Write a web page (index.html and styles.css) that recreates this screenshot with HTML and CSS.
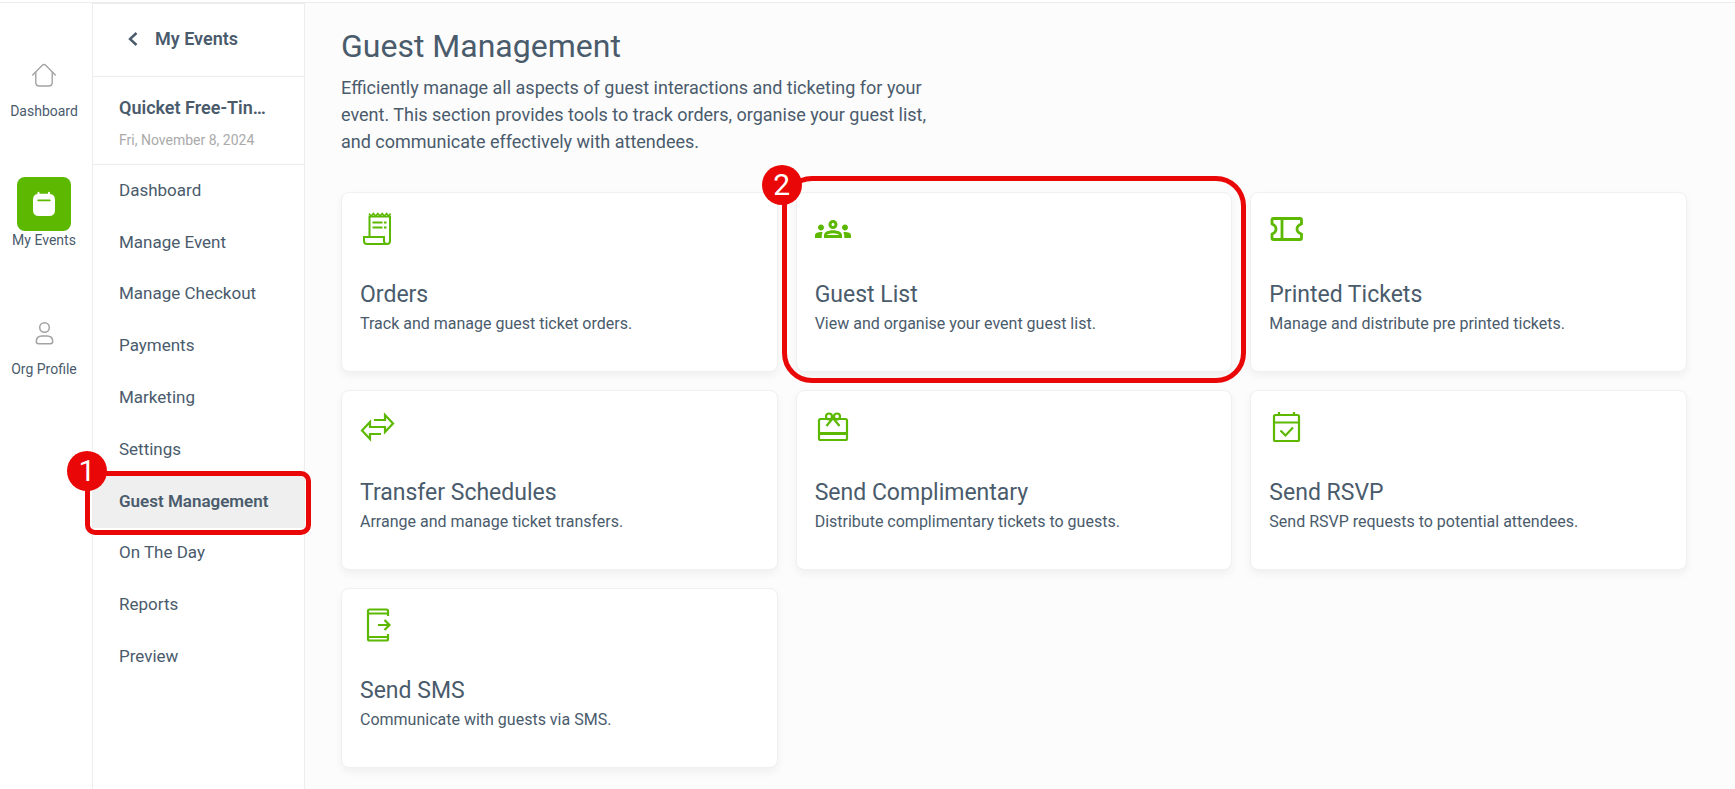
FILE: index.html
```html
<!DOCTYPE html>
<html lang="en">
<head>
    <meta charset="UTF-8">
    <meta name="viewport" content="width=device-width, initial-scale=1.0">
    <title>Guest Management</title>
    <link rel="stylesheet" href="styles.css">
</head>
<body>
    <div class="layout">
        <nav class="rail">
            <a href="#" class="rail-item">
                <span class="rail-icon">
                    <svg width="26" height="26" viewBox="0 0 26 26" fill="none" stroke="#a3a3a3" stroke-width="1.4" stroke-linecap="round" stroke-linejoin="round">
                        <path d="M1.7 13 11.3 3.2q1.7-1.5 3.4 0L24.3 13M4.8 10.5V20.500q0 3.500 3.500 3.500h9.400q3.500 0 3.500-3.500V10.500"/>
                    </svg>
                </span>
                <span>Dashboard</span>
            </a>
            <a href="#" class="rail-item">
                <span class="rail-icon active">
                    <svg width="26" height="26" viewBox="0 0 26 26">
                        <path fill="#fff" d="M7.500.8q1 0 1 1v1h8.500v-1q0-1 1-1t1 1v1.100q5 .6 5 6V19q0 6-6 6H8q-6 0-6-6V8.900q0-5.400 4.500-6V1.800q0-1 1-1z"/>
                        <path stroke="#5cb800" stroke-width="1.700" stroke-linecap="round" d="M7.200 9.300h11.600"/>
                    </svg>
                </span>
                <span>My Events</span>
            </a>
            <a href="#" class="rail-item">
                <span class="rail-icon">
                    <svg width="26" height="26" viewBox="0 0 26 26" fill="none" stroke="#a3a3a3" stroke-width="1.500">
                        <circle cx="13.500" cy="7.500" r="4.800"/>
                        <path d="M5.300 21.500q0-5.500 5.700-5.500h5q5.700 0 5.700 5.500 0 2.200-2.200 2.200h-12q-2.200 0-2.200-2.200z"/>
                    </svg>
                </span>
                <span>Org Profile</span>
            </a>
        </nav>

        <aside class="sidebar">
            <a href="#" class="back">
                <svg width="12" height="16" viewBox="0 0 12 16" fill="none" stroke="#4a5b6c" stroke-width="2.400">
                    <path d="M9.500 2 3 8l6.500 6"/>
                </svg>
                My Events
            </a>
            <div class="event">
                <div class="event-name">Quicket Free-Tin…</div>
                <div class="event-date">Fri, November 8, 2024</div>
            </div>
            <nav class="menu">
                <a href="#">Dashboard</a>
                <a href="#">Manage Event</a>
                <a href="#">Manage Checkout</a>
                <a href="#">Payments</a>
                <a href="#">Marketing</a>
                <a href="#">Settings</a>
                <a href="#" class="current">Guest Management<span class="marker marker-menu"><span class="step">1</span></span></a>
                <a href="#">On The Day</a>
                <a href="#">Reports</a>
                <a href="#">Preview</a>
            </nav>
        </aside>

        <main class="content">
            <h1>Guest Management</h1>
            <p class="intro">Efficiently manage all aspects of guest interactions and ticketing for your event. This section provides tools to track orders, organise your guest list, and communicate effectively with attendees.</p>

            <div class="cards">
                <a href="#" class="card">
                    <svg class="icon line" viewBox="0 0 36 36" stroke-width="2">
                        <path d="M9.500 25V5.500h20.500V30q0 3-3 3H7q-3 0-3-3v-4h20v4q0 3 3 3"/>
                        <path d="M12.500 11.500h10M12.500 16.500h10M24 11.500h2.500M24 16.500h2.500"/>
                        <path stroke-width="1.500" d="M9 2.500l2.200 2.500 2.200-2.500L15.600 5l2.200-2.500L20 5l2.200-2.500L24.400 5l2.200-2.500L28.600 5l2-2.500"/>
                    </svg>
                    <h2>Orders</h2>
                    <p>Track and manage guest ticket orders.</p>
                </a>
                <a href="#" class="card">
                    <svg class="icon" viewBox="0 0 24 24">
                        <path d="M4 13c1.100 0 2-.9 2-2s-.9-2-2-2-2 .9-2 2 .9 2 2 2zm1.130 1.100C4.760 14.040 4.390 14 4 14c-.99 0-1.930.21-2.780.58C.48 14.900 0 15.620 0 16.430V18h4.500v-1.610c0-.83.23-1.610.63-2.290zM20 13c1.100 0 2-.9 2-2s-.9-2-2-2-2 .9-2 2 .9 2 2 2zm4 3.430c0-.81-.48-1.530-1.220-1.850C21.930 14.210 20.990 14 20 14c-.39 0-.76.04-1.130.1.400.68.630 1.460.630 2.290V18H24v-1.570zM16.240 13.650c-1.170-.52-2.610-.9-4.240-.9s-3.070.39-4.240.9C6.680 14.130 6 15.210 6 16.390V18h12v-1.610c0-1.180-.68-2.260-1.760-2.740zM8.070 16c.09-.23.13-.39.910-.69.970-.38 1.990-.56 3.020-.56s2.050.18 3.020.56c.77.3.810.46.910.69H8.070zM12 8c.55 0 1 .45 1 1s-.45 1-1 1-1-.45-1-1 .45-1 1-1m0-2c-1.660 0-3 1.340-3 3s1.340 3 3 3 3-1.340 3-3-1.340-3-3-3z"/>
                    </svg>
                    <h2>Guest List</h2>
                    <p>View and organise your event guest list.</p>
                    <span class="marker marker-card"><span class="step">2</span></span>
                </a>
                <a href="#" class="card">
                    <svg class="icon line" viewBox="0 0 36 36" stroke-width="2.800" stroke-linejoin="round">
                        <path d="M4.500 7.500h26.500q1.500 0 1.500 1.500v4q-4.500 1.500-4.500 5t4.500 5v4q0 1.500-1.500 1.500H4.500q-1.500 0-1.500-1.500v-4q4-1.500 4-5t-4-5V9q0-1.500 1.500-1.500zM13 7.500v21"/>
                    </svg>
                    <h2>Printed Tickets</h2>
                    <p>Manage and distribute pre printed tickets.</p>
                </a>
                <a href="#" class="card">
                    <svg class="icon line" viewBox="0 0 36 36" stroke-width="2.200">
                        <path d="M14 11h11V6l8 8.500-8 8.500v-5H10v-5l-8 8.500L10 30v-5h11"/>
                    </svg>
                    <h2>Transfer Schedules</h2>
                    <p>Arrange and manage ticket transfers.</p>
                </a>
                <a href="#" class="card">
                    <svg class="icon line" viewBox="0 0 36 36" stroke-width="2.200">
                        <rect x="4" y="10" width="28" height="21" rx="1.500"/>
                        <circle cx="14" cy="7.500" r="3"/>
                        <circle cx="22" cy="7.500" r="3"/>
                        <path d="M18 9l-6.500 8M18 9l6.500 8"/>
                        <path stroke-width="3" d="M4 24.500h28"/>
                    </svg>
                    <h2>Send Complimentary</h2>
                    <p>Distribute complimentary tickets to guests.</p>
                </a>
                <a href="#" class="card">
                    <svg class="icon line" viewBox="0 0 36 36" stroke-width="2.200">
                        <rect x="5" y="6" width="25" height="26" rx="1.500"/>
                        <path d="M5 13.500h25M10 3v3M25 3v3M11.500 21.500l5 5 7.500-8"/>
                    </svg>
                    <h2>Send RSVP</h2>
                    <p>Send RSVP requests to potential attendees.</p>
                </a>
                <a href="#" class="card">
                    <svg class="icon line" viewBox="0 0 36 36" stroke-width="2.200">
                        <path d="M28 9V4q0-1.500-1.500-1.500h-17Q8 2.500 8 4v28q0 1.500 1.500 1.500h17q1.500 0 1.500-1.500v-5M8 6.500h20M8 30h20M18 18h12M24.500 13l5 5-5 5"/>
                    </svg>
                    <h2>Send SMS</h2>
                    <p>Communicate with guests via SMS.</p>
                </a>
            </div>
        </main>
    </div>
</body>
</html>
```
FILE: styles.css
```css
* {
    box-sizing: border-box;
}
body {
    margin: 0;
    padding-top: 2px;
    font-family: Roboto, sans-serif;
    background-color: #fff;
    color: #4a5b6c;
}
a {
    color: inherit;
    text-decoration: none;
}
h1, h2, p {
    margin: 0;
    font-weight: 400;
}
.layout {
    display: flex;
    min-height: calc(100vh - 2px);
    border-top: 1px solid #ededed;
}

/* left icon rail */
.rail {
    display: flex;
    flex-direction: column;
    gap: 57px;
    width: 92px;
    padding: 45px 4px 0 0;
    font-size: 14px;
    line-height: 18px;
}
.rail-item {
    display: flex;
    flex-direction: column;
    align-items: center;
}
.rail-icon {
    display: flex;
    align-items: center;
    justify-content: center;
    width: 54px;
    height: 54px;
    border-radius: 8px;
}
.rail-icon.active {
    background: #5cb800;
}

/* event menu */
.sidebar {
    position: relative;
    z-index: 1;
    width: 213px;
    border: 1px solid #ededed;
    border-bottom: 0;
}
.back {
    display: flex;
    align-items: center;
    gap: 16px;
    height: 73px;
    padding: 0 0 3px 34px;
    border-bottom: 1px solid #ededed;
    font-size: 18px;
    font-weight: 600;
}
.event {
    height: 88px;
    padding: 17px 26px 0;
    border-bottom: 1px solid #ededed;
}
.event-name {
    font-size: 18px;
    font-weight: 600;
    line-height: 28px;
    white-space: nowrap;
}
.event-date {
    margin-top: 8px;
    color: #aaa;
    font-size: 14px;
    line-height: 20px;
    white-space: nowrap;
}
.menu {
    display: grid;
    grid-auto-rows: 1fr;
    min-height: 518px;
    font-size: 17px;
}
.menu a {
    position: relative;
    display: flex;
    align-items: center;
    padding: 0 0 2px 26px;
    white-space: nowrap;
}
.menu .current {
    background: #efefef;
    font-weight: 600;
}

/* main area */
.content {
    flex: 1;
    padding: 23px 48px 22px 36px;
    background: #fcfcfc;
}
h1 {
    font-size: 32px;
    line-height: 40px;
}
.intro {
    max-width: 600px;
    margin-top: 8px;
    font-size: 18px;
    line-height: 27px;
}
.cards {
    display: grid;
    grid-template-columns: repeat(3, 1fr);
    gap: 18px;
    margin-top: 37px;
}
.card {
    position: relative;
    height: 180px;
    padding: 18px;
    background: #fff;
    border: 1px solid #f0f0f0;
    border-radius: 8px;
    box-shadow: 0 4px 8px rgba(0, 0, 0, 0.05);
}
.card h2 {
    margin-top: 32px;
    font-size: 23px;
    line-height: 32px;
}
.card p {
    font-size: 16px;
    line-height: 26px;
}
.icon {
    display: block;
    width: 36px;
    height: 36px;
    fill: #5cb800;
}
.icon.line {
    fill: none;
    stroke: #5cb800;
}

/* numbered callouts */
.marker {
    position: absolute;
    border: 5px solid #ea0707;
    pointer-events: none;
}
.marker-menu {
    inset: -5px -7px -7px -8px;
    border-radius: 10px;
}
.marker-card {
    inset: -17px -15px -12px -15px;
    border-radius: 30px;
}
.step {
    position: absolute;
    top: -25px;
    left: -23px;
    width: 40px;
    height: 40px;
    border-radius: 50%;
    background: #ea0707;
    color: #fff;
    font-size: 30px;
    font-weight: 400;
    line-height: 40px;
    text-align: center;
}
.marker-card .step {
    top: -16px;
    left: -25px;
}
```
